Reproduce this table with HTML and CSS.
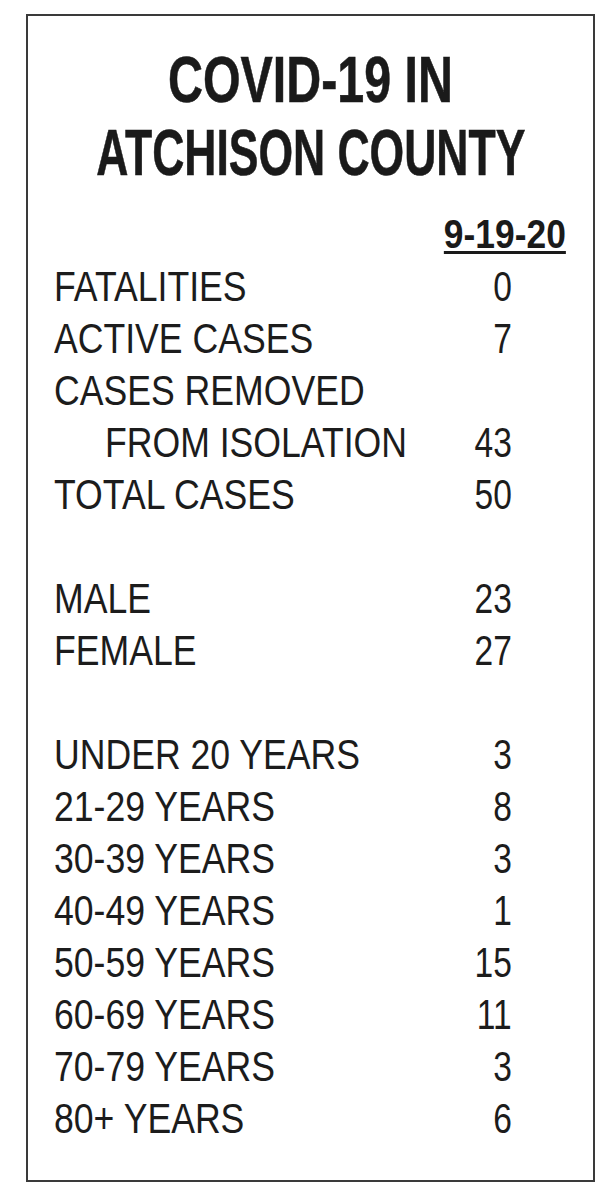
FILE: index.html
```html
<!DOCTYPE html>
<html lang="en">
<head>
<meta charset="utf-8">
<title>COVID-19 in Atchison County</title>
<link rel="stylesheet" href="styles.css">
</head>
<body>
<div class="card">
  <h1 class="title">
    <span class="tline"><span class="t1">COVID-19 IN</span></span>
    <span class="tline"><span class="t2">ATCHISON COUNTY</span></span>
  </h1>
  <div class="date-row"><span class="date">9-19-20</span></div>
  <div class="rows">
    <div class="row"><span class="lbl">FATALITIES</span><span class="val">0</span></div>
    <div class="row"><span class="lbl">ACTIVE CASES</span><span class="val">7</span></div>
    <div class="row"><span class="lbl">CASES REMOVED</span><span class="val"></span></div>
    <div class="row"><span class="lbl indent">FROM ISOLATION</span><span class="val">43</span></div>
    <div class="row"><span class="lbl">TOTAL CASES</span><span class="val">50</span></div>
    <div class="row blank"></div>
    <div class="row"><span class="lbl">MALE</span><span class="val">23</span></div>
    <div class="row"><span class="lbl">FEMALE</span><span class="val">27</span></div>
    <div class="row blank"></div>
    <div class="row"><span class="lbl">UNDER 20 YEARS</span><span class="val">3</span></div>
    <div class="row"><span class="lbl">21-29 YEARS</span><span class="val">8</span></div>
    <div class="row"><span class="lbl">30-39 YEARS</span><span class="val">3</span></div>
    <div class="row"><span class="lbl">40-49 YEARS</span><span class="val">1</span></div>
    <div class="row"><span class="lbl">50-59 YEARS</span><span class="val">15</span></div>
    <div class="row"><span class="lbl">60-69 YEARS</span><span class="val">11</span></div>
    <div class="row"><span class="lbl">70-79 YEARS</span><span class="val">3</span></div>
    <div class="row"><span class="lbl">80+ YEARS</span><span class="val">6</span></div>
  </div>
</div>
</body>
</html>
```
FILE: styles.css
```css
html, body {
  margin: 0;
  padding: 0;
  background: #ffffff;
}

body {
  font-family: "Liberation Sans", Arial, sans-serif;
  color: #1c1c1c;
}

.card {
  box-sizing: border-box;
  margin: 14px 0 0 26px;
  width: 569px;
  height: 1168px;
  border: 2px solid #3a3a3a;
  background: #ffffff;
  overflow: hidden;
}

.title {
  margin: 0;
  padding-top: 28px;
  font-size: 64px;
  line-height: 73px;
  font-weight: 700;
  color: #1a1a1a;
}

.tline {
  display: flex;
  justify-content: center;
  white-space: nowrap;
}

.t1,
.t2 {
  flex: none;
  display: block;
  transform-origin: center;
  -webkit-text-stroke: 0.6px #1a1a1a;
}

.t1 {
  transform: scaleX(0.756);
}

.t2 {
  transform: scaleX(0.695);
}

.date-row {
  margin-top: 22px;
  padding-right: 27px;
  text-align: right;
  font-size: 40px;
  line-height: 44px;
  font-weight: 700;
  color: #1a1a1a;
}

.date {
  display: inline-block;
  transform: scaleX(0.885);
  transform-origin: right;
  text-decoration: underline;
  text-decoration-thickness: 3px;
  text-underline-offset: 3px;
}

.rows {
  margin-top: 4px;
  padding: 0 81px 0 26px;
}

.row {
  display: grid;
  grid-template-columns: minmax(0, 1fr) auto;
  height: 52px;
  font-size: 43px;
  line-height: 52px;
  white-space: nowrap;
}

.lbl {
  display: block;
  transform: scaleX(0.828);
  transform-origin: left;
}

.lbl.indent {
  margin-left: 51px;
}

.val {
  display: block;
  text-align: right;
  transform: scaleX(0.78);
  transform-origin: right;
}
```
